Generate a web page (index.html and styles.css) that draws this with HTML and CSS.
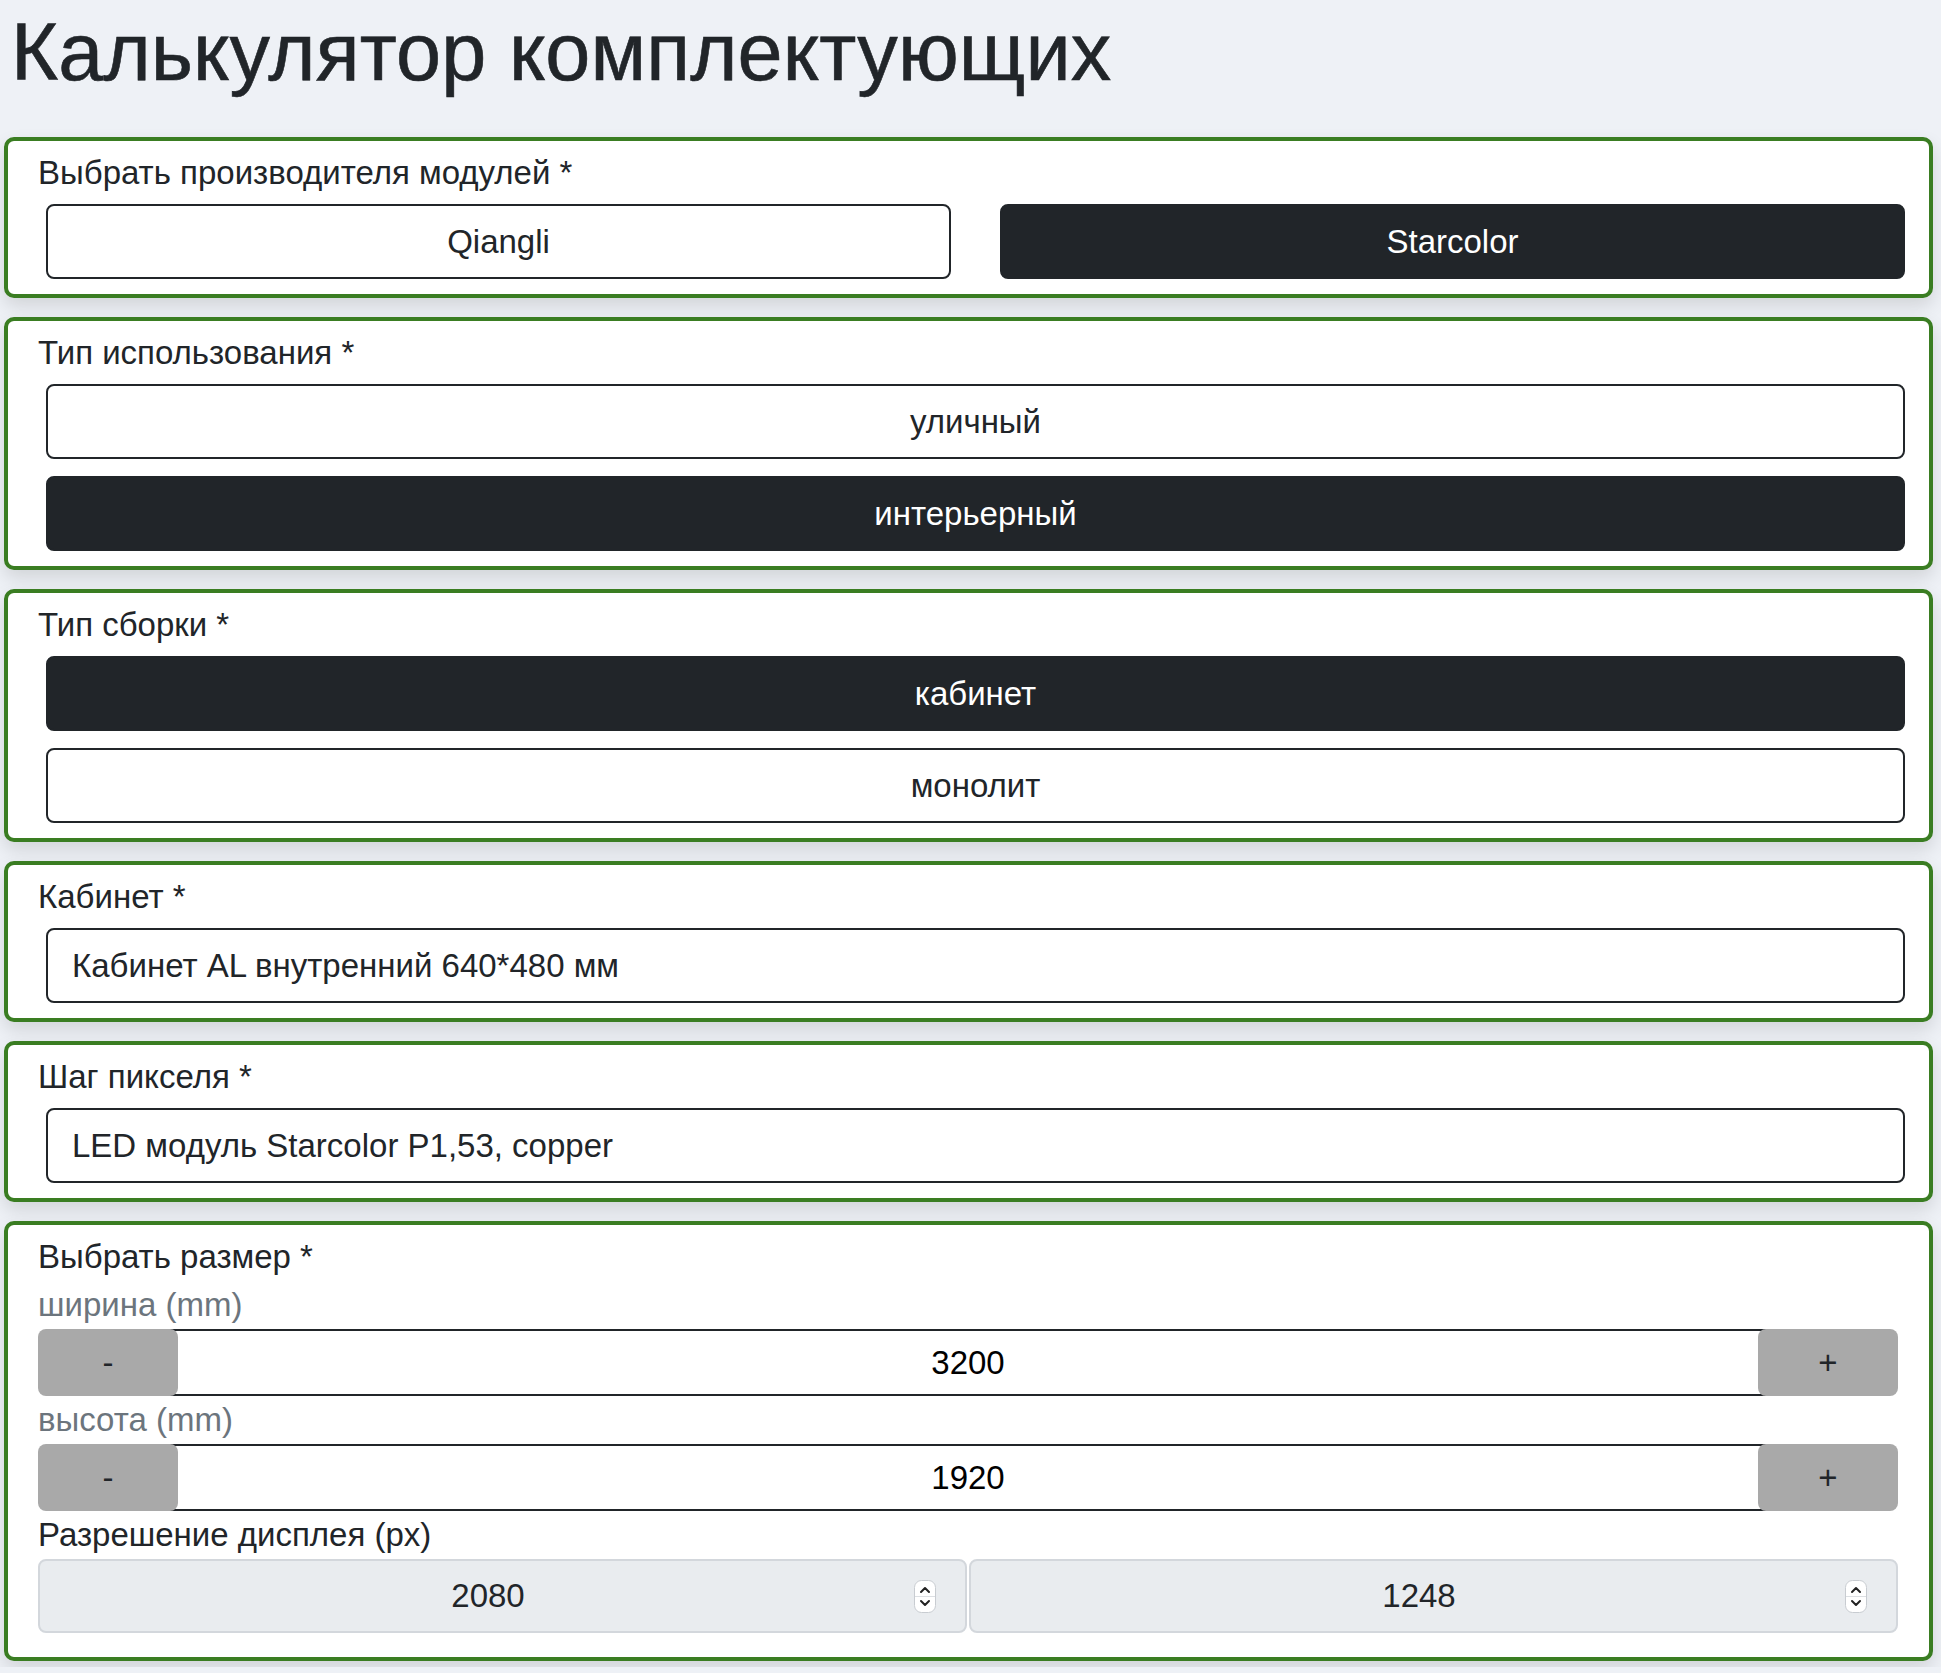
FILE: index.html
```html
<!DOCTYPE html>
<html lang="ru">
<head>
<meta charset="utf-8">
<title>Калькулятор комплектующих</title>
<link rel="stylesheet" href="styles.css">
</head>
<body>
<main class="page">
  <h1 class="title">Калькулятор комплектующих</h1>

  <section class="card">
    <div class="label">Выбрать производителя модулей *</div>
    <div class="choices choices-row">
      <button class="opt">Qiangli</button>
      <button class="opt active">Starcolor</button>
    </div>
  </section>

  <section class="card">
    <div class="label">Тип использования *</div>
    <div class="choices choices-col">
      <button class="opt">уличный</button>
      <button class="opt active">интерьерный</button>
    </div>
  </section>

  <section class="card">
    <div class="label">Тип сборки *</div>
    <div class="choices choices-col">
      <button class="opt active">кабинет</button>
      <button class="opt">монолит</button>
    </div>
  </section>

  <section class="card">
    <div class="label">Кабинет *</div>
    <div class="field">Кабинет AL внутренний 640*480 мм</div>
  </section>

  <section class="card">
    <div class="label">Шаг пикселя *</div>
    <div class="field">LED модуль Starcolor P1,53, copper</div>
  </section>

  <section class="card card-size">
    <div class="label">Выбрать размер *</div>
    <div class="sublabel">ширина (mm)</div>
    <div class="stepper">
      <button class="step">-</button>
      <div class="stepper-input">3200</div>
      <button class="step">+</button>
    </div>
    <div class="sublabel">высота (mm)</div>
    <div class="stepper">
      <button class="step">-</button>
      <div class="stepper-input">1920</div>
      <button class="step">+</button>
    </div>
    <div class="label label-res">Разрешение дисплея (px)</div>
    <div class="res-row">
      <div class="num">
        <span class="num-val">2080</span>
        <svg class="spin" width="22" height="33" viewBox="0 0 22 33">
          <rect x="0.5" y="0.5" width="21" height="32" rx="7" fill="#fff" stroke="#c8ccd1"/>
          <line x1="1" y1="16.5" x2="21" y2="16.5" stroke="#dcdfe3"/>
          <path d="M7 12 L11 8 L15 12" fill="none" stroke="#222" stroke-width="2" stroke-linecap="round" stroke-linejoin="round"/>
          <path d="M7 21 L11 25 L15 21" fill="none" stroke="#222" stroke-width="2" stroke-linecap="round" stroke-linejoin="round"/>
        </svg>
      </div>
      <div class="num">
        <span class="num-val">1248</span>
        <svg class="spin" width="22" height="33" viewBox="0 0 22 33">
          <rect x="0.5" y="0.5" width="21" height="32" rx="7" fill="#fff" stroke="#c8ccd1"/>
          <line x1="1" y1="16.5" x2="21" y2="16.5" stroke="#dcdfe3"/>
          <path d="M7 12 L11 8 L15 12" fill="none" stroke="#222" stroke-width="2" stroke-linecap="round" stroke-linejoin="round"/>
          <path d="M7 21 L11 25 L15 21" fill="none" stroke="#222" stroke-width="2" stroke-linecap="round" stroke-linejoin="round"/>
        </svg>
      </div>
    </div>
  </section>
</main>
</body>
</html>
```

FILE: styles.css
```css
* {
  box-sizing: border-box;
}

html,
body {
  margin: 0;
}

body {
  background: #eef1f6;
  font-family: "Liberation Sans", Arial, sans-serif;
  color: #212529;
  font-size: 33px;
  line-height: 48px;
}

.page {
  padding: 4px 8px 6px 4px;
  display: flex;
  flex-direction: column;
  gap: 19px;
}

.title {
  margin: 0 0 18px 0;
  padding-left: 7px;
  font-size: 81px;
  letter-spacing: 0.1px;
  line-height: 96px;
  font-weight: 400;
  color: #212529;
  -webkit-text-stroke: 0.6px #212529;
}

.card {
  background: #fff;
  border: 4px solid #3a7d22;
  border-radius: 10px;
  box-shadow: 0 8px 18px rgba(0, 0, 0, 0.12);
  padding: 8px 31px 15px 30px;
}

.card-size {
  padding-bottom: 24px;
}

.label {
  margin-bottom: 7px;
}

.card-size .label {
  margin-bottom: 0;
}

.label-res {
  margin-bottom: 1px;
}

.sublabel {
  color: #6c757d;
}

.choices {
  margin: 0 -7px 0 8px;
}

.choices-row {
  display: grid;
  grid-template-columns: 1fr 1fr;
  gap: 49px;
}

.choices-col {
  display: flex;
  flex-direction: column;
  gap: 17px;
}

.opt {
  height: 75px;
  border: 2px solid #212529;
  border-radius: 8px;
  background: #fff;
  color: #212529;
  font: inherit;
  padding: 0;
}

.opt.active {
  background: #212529;
  color: #fff;
}

.field {
  margin: 0 -7px 0 8px;
  height: 75px;
  border: 2px solid #212529;
  border-radius: 8px;
  padding: 0 24px;
  display: flex;
  align-items: center;
  color: #212529;
}

.stepper {
  display: flex;
  height: 67px;
}

.step {
  width: 140px;
  flex: none;
  background: #a9a9a9;
  border: 0;
  border-radius: 8px;
  font: inherit;
  color: #212529;
  padding: 0;
  position: relative;
  z-index: 1;
}

.stepper-input {
  flex: 1;
  margin: 0 -10px;
  border-top: 2px solid #212529;
  border-bottom: 2px solid #212529;
  display: flex;
  align-items: center;
  justify-content: center;
  color: #000;
}

.res-row {
  display: grid;
  grid-template-columns: 1fr 1fr;
  gap: 2px;
}

.num {
  height: 74px;
  background: #e9ecef;
  border: 2px solid #d3d7dc;
  border-radius: 8px;
  display: flex;
  align-items: center;
  padding: 0 29px 0 22px;
}

.num-val {
  flex: 1;
  text-align: center;
}

.spin {
  flex: none;
  display: block;
}
```
